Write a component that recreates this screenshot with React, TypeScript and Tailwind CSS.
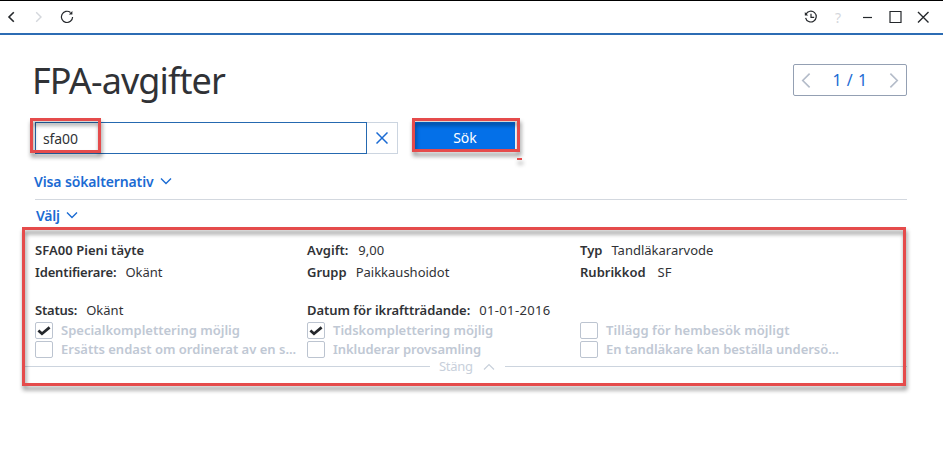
import React from "react";

interface FieldProps {
  label: string;
  value?: string;
  labelClass?: string;
  valueClass?: string;
}

interface OptionProps {
  label: string;
  checked?: boolean;
  className?: string;
}

const Chevron = ({ d, className }: { d: string; className: string }) => (
  <svg viewBox="0 0 12 12" fill="none" stroke="currentColor" className={className}>
    <path d={d} />
  </svg>
);

const Field: React.FC<FieldProps> = ({ label, value, labelClass = "", valueClass = "" }) => (
  <div className="flex h-[22px] items-center whitespace-nowrap">
    <span className={`font-semibold ${labelClass}`}>{label}</span>
    {value && <span className={`ml-[9px] ${valueClass}`}>{value}</span>}
  </div>
);

const Option: React.FC<OptionProps> = ({ label, checked = false, className = "" }) => (
  <div className="flex h-[19px] items-center whitespace-nowrap">
    <span className="flex h-[17px] w-[18px] shrink-0 items-center justify-center rounded-[2px] border border-[#bcc4d0]">
      {checked && (
        <svg viewBox="0 0 14 12" fill="none" stroke="#25282c" strokeWidth="2.7" className="h-3 w-3.5">
          <path d="M1.4 5.4 5 8.8 12.6 2.4" />
        </svg>
      )}
    </span>
    <span className={`ml-2 font-semibold text-[#c0c8d4] ${className}`}>{label}</span>
  </div>
);

const TitleBar = () => (
  <header className="flex h-[35px] items-center border-t border-b-2 border-t-black border-b-[#2c6cb4] text-[#25282c]">
    <Chevron d="M7.8 1.2 3 6l4.8 4.8" className="ml-1.5 h-3 w-3 stroke-[1.6]" />
    <Chevron d="M4.2 1.2 9 6l-4.8 4.8" className="ml-3.5 h-3 w-3 stroke-[1.4] text-[#d4d7dc]" />
    <svg viewBox="0 0 14 14" fill="none" stroke="currentColor" strokeWidth="1.2" className="ml-4 h-3.5 w-3.5">
      <path d="M10.5 2.5A5.6 5.6 0 1 0 12.6 7" />
      <path d="M12.4 1v3.6H8.8z" fill="currentColor" stroke="none" />
    </svg>
    <svg viewBox="0 0 14 14" fill="none" stroke="currentColor" strokeWidth="1.2" className="ml-[730px] h-3.5 w-3.5">
      <path d="M2 4.2a5.4 5.4 0 1 1-.4 3.6M7 3.8v3.6h3.2" />
      <path d="M.8 2v3.4h3.4z" fill="currentColor" stroke="none" />
    </svg>
    <span className="ml-[17px] w-2 text-[14px] text-[#d4d7dc]">?</span>
    <svg viewBox="0 0 66 14" fill="none" stroke="currentColor" className="ml-5 h-3.5 w-[66px]">
      <path d="M0 7.5h9" strokeWidth="1.2" />
      <path d="M27 1.5h11v11H27z" strokeWidth="1.2" />
      <path d="m55 2 10.5 10.5M65.5 2 55 12.5" strokeWidth="1.4" />
    </svg>
  </header>
);

const Pager = () => (
  <div className="mt-[29px] flex h-8 w-[114px] items-center justify-between rounded-[2px] border border-[#94a0b3] px-[5px] text-[#b4bcc9]">
    <Chevron d="M8.5.5 3 6l5.5 5.5" className="h-[15px] w-[15px] stroke-[1.3]" />
    <span className="text-[16px] tracking-[0.5px] text-[#1b6bd3]">1 / 1</span>
    <Chevron d="M3.5.5 9 6l-5.5 5.5" className="h-[15px] w-[15px] stroke-[1.3]" />
  </div>
);

const SearchRow = () => (
  <div className="mt-[26px] flex">
    <div className="flex h-8 w-[332px] items-center border border-[#2569b0] pl-[7px] text-[14px] tracking-[-0.1px]">sfa00</div>
    <button className="flex h-8 w-[31px] items-center justify-center border border-l-0 border-[#ccd5e0] text-[#1b6bd3]">
      <svg viewBox="0 0 12 12" stroke="currentColor" strokeWidth="1.5" className="h-3 w-3">
        <path d="m.5.5 11 11m0-11-11 11" />
      </svg>
    </button>
    <button className="ml-[17px] h-[29px] w-[100px] bg-[#0470e8] pt-px text-[14px] text-white">Sök</button>
  </div>
);

const FeeDetails = () => (
  <section className="grid grid-cols-[272px_273px_1fr] pt-[14px] text-[13px]">
    <div>
      <Field label="SFA00 Pieni täyte" labelClass="tracking-[0.05px]" />
      <Field label="Identifierare:" value="Okänt" labelClass="tracking-[-0.15px]" />
      <div className="h-4" />
      <Field label="Status:" value="Okänt" labelClass="tracking-[-0.2px]" />
      <div className="-mt-px">
        <Option label="Specialkomplettering möjlig" checked />
        <Option label="Ersätts endast om ordinerat av en s..." />
      </div>
    </div>
    <div>
      <Field label="Avgift:" value="9,00" valueClass="pl-px" />
      <Field label="Grupp" value="Paikkaushoidot" />
      <div className="h-4" />
      <Field
        label="Datum för ikraftträdande:"
        value="01-01-2016"
        labelClass="tracking-[-0.05px]"
        valueClass="tracking-[0.35px]"
      />
      <div className="-mt-px">
        <Option label="Tidskomplettering möjlig" checked />
        <Option label="Inkluderar provsamling" className="tracking-[-0.05px]" />
      </div>
    </div>
    <div>
      <Field label="Typ" value="Tandläkararvode" />
      <Field label="Rubrikkod" value="SF" valueClass="pl-[3px]" />
      <div className="h-[37px]" />
      <Option label="Tillägg för hembesök möjligt" className="tracking-[0.05px]" />
      <Option label="En tandläkare kan beställa undersö..." className="tracking-[-0.05px]" />
    </div>
  </section>
);

// Red callout frame; the drop shadow falls on both sides of the line
const Callout = ({ className }: { className: string }) => (
  <div className={`pointer-events-none absolute drop-shadow-[1px_4px_2px_rgba(0,0,0,0.45)] ${className}`} />
);

const App = () => {
  return (
    <div className="relative h-[462px] w-[943px] overflow-hidden bg-white font-['Noto_Sans','Open_Sans',sans-serif] text-[#303236]">
      <TitleBar />
      <main className="pr-9 pl-[35px]">
        <div className="flex h-[61px] justify-between">
          <h1 className="mt-[21px] -ml-[3px] text-[36px] leading-[50px] tracking-[-0.9px] whitespace-nowrap">
            FPA-avgifter
          </h1>
          <Pager />
        </div>
        <SearchRow />
        <button className="mt-4 -ml-px flex h-[22px] items-center text-[14px] font-semibold tracking-[-0.13px] text-[#1b6bd3]">
          Visa sökalternativ
          <Chevron d="m1 3.5 5 5 5-5" className="ml-1.5 h-3 w-3 stroke-[1.4]" />
        </button>
        <div className="mt-[7px] border-t border-[#d3d8df]" />
        <button className="mt-1 ml-px flex h-[22px] items-center text-[14px] font-semibold tracking-[-0.2px] text-[#1b6bd3]">
          Välj
          <Chevron d="m1 3.5 5 5 5-5" className="ml-1.5 h-3 w-3 stroke-[1.4]" />
        </button>
        <FeeDetails />
        <div className="-ml-2.5 flex h-[15px] items-center text-[13px] text-[#c8d0db]">
          <span className="w-[405px] border-t border-[#ccd4de]" />
          <span className="ml-[9px] tracking-[-0.3px]">Stäng</span>
          <Chevron d="m1 8.5 5-5 5 5" className="mx-2.5 h-3 w-3 stroke-[1.2]" />
          <span className="flex-1 border-t border-[#ccd4de]" />
        </div>
      </main>

      <Callout className="top-[118px] left-[30px] h-[35px] w-[71px] border-3 border-[#e54b4b]" />
      <Callout className="top-[118px] left-[412px] h-[34px] w-[108px] border-3 border-[#e54b4b]" />
      <Callout className="top-[158px] left-[517px] h-0.5 w-[5px] bg-[#e54b4b]" />
      <Callout className="top-[227px] left-[22px] h-[159px] w-[884px] border-3 border-[#e54b4b]" />
    </div>
  );
};

export default App;
